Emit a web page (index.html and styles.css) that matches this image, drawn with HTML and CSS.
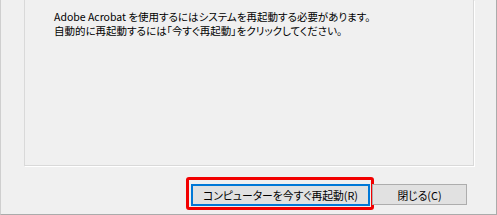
FILE: index.html
```html
<!DOCTYPE html>
<html lang="ja">

<head>
    <meta charset="UTF-8">
    <title>Adobe Acrobat</title>
    <link rel="stylesheet" href="styles.css">
</head>

<body>
    <div class="dialog">
        <div class="message-panel">
            <p>Adobe Acrobat を使用するにはシステムを再起動する必要があります。</p>
            <p>自動的に再起動するには「今すぐ再起動」をクリックしてください。</p>
        </div>
        <div class="button-row">
            <button class="btn btn-default">コンピューターを今すぐ再起動(R)
                <span class="highlight-box"></span>
            </button>
            <button class="btn">閉じる(C)</button>
        </div>
    </div>
</body>

</html>
```

FILE: styles.css
```css
/* Basic reset */
* {
    margin: 0;
    padding: 0;
    box-sizing: border-box;
}

body {
    font-family: "Noto Sans CJK JP", "Noto Sans", sans-serif;
    font-size: 10.8px;
    font-feature-settings: "palt";
    background: #f0f0f0;
    color: #000;
}

.dialog {
    width: 497px;
    height: 215px;
    display: flex;
    flex-direction: column;
    border-left: 1px solid #cfcfcf;
    border-right: 1px solid #ababab;
    border-bottom: 1px solid #ababab;
}

/* Message area */
.message-panel {
    height: 166px;
    margin: 0 22px 0 23px;
    border: 1px solid #d9d9d9;
    border-top: none;
    box-shadow: 1px 1px 0 #fff;
    padding: 10px 0 0 29px;
    font-size: 10.5px;
}

.message-panel p {
    line-height: 14px;
}

/* Buttons */
.button-row {
    display: flex;
    justify-content: flex-end;
    gap: 2px;
    padding: 18px 29px 0 0;
}

.btn {
    position: relative;
    height: 21px;
    width: 95px;
    font-family: inherit;
    font-size: 10.8px;
    font-feature-settings: "palt";
    background: #e1e1e1;
    border: 1px solid #adadad;
    color: #000;
}

.btn-default {
    width: 179px;
    height: 22px;
    border: 2px solid #0078d7;
}

.highlight-box {
    position: absolute;
    left: -7px;
    top: -9px;
    right: -6px;
    bottom: -6px;
    border: 3px solid #f20000;
    border-radius: 3px;
}
```
